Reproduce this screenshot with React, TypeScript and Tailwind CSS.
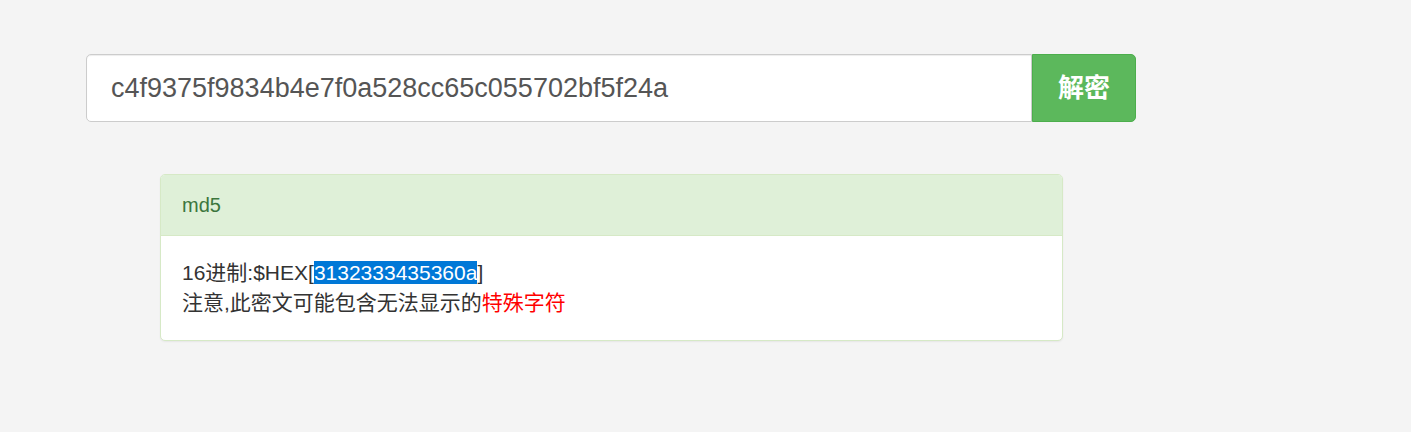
export default function App() {
  const font = { fontFamily: '"Liberation Sans", Arial, "Noto Sans CJK SC", sans-serif' };
  return (
    <div className="min-h-[432px] w-full bg-[#f4f4f4] pt-[54px]" style={font}>
      <div className="ml-[86px] flex h-[68px] w-[1050px]">
        <input
          readOnly
          value="c4f9375f9834b4e7f0a528cc65c055702bf5f24a"
          className="h-full flex-1 rounded-l-[5px] border border-[#cccccc] bg-white pl-[24px] text-[27px] text-[#555555] shadow-[inset_0_1px_1px_rgba(0,0,0,0.075)] outline-none"
          style={font}
        />
        <button className="h-full w-[104px] rounded-r-[5px] border border-[#4cae4c] bg-[#5cb85c] text-[26px] font-bold text-white">
          解密
        </button>
      </div>

      <div className="ml-[160px] mt-[52px] w-[903px] overflow-hidden rounded-[5px] border border-[#d6e9c6] bg-white shadow-[0_1px_2px_rgba(0,0,0,0.06)]">
        <div className="flex h-[61px] items-center border-b border-[#d6e9c6] bg-[#dff0d8] px-[21px] text-[20px] text-[#3c763d]">
          md5
        </div>
        <div className="px-[21px] py-[22px] text-[21px] leading-[30px] text-[#333333]">
          <div>
            16进制:$HEX[<span className="bg-[#0078d7] text-white">3132333435360a</span>]
          </div>
          <div>
            注意,此密文可能包含无法显示的<span className="text-[#ff0000]">特殊字符</span>
          </div>
        </div>
      </div>
    </div>
  );
}
